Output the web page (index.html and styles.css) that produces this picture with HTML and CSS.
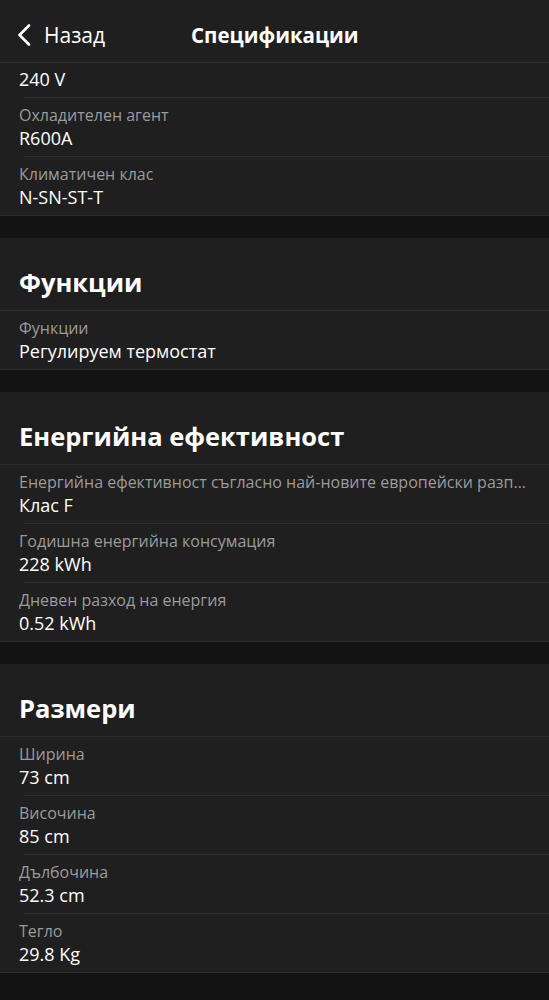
FILE: index.html
```html
<!DOCTYPE html>
<html lang="bg">
<head>
  <meta charset="UTF-8">
  <meta name="viewport" content="width=device-width, initial-scale=1.0">
  <title>Спецификации</title>
  <link rel="stylesheet" href="styles.css">
</head>
<body>

<header class="topbar">
  <a class="back" href="#">
    <svg width="14" height="22" viewBox="0 0 14 22" aria-hidden="true">
      <path d="M12 1.5 L2.5 11 L12 20.5" fill="none" stroke="#fff" stroke-width="2.6" stroke-linecap="round" stroke-linejoin="round"/>
    </svg>
    <span>Назад</span>
  </a>
  <h1 class="topbar-title">Спецификации</h1>
</header>

<main class="specs">
  <section class="group">
    <div class="row row-cut">
      <div class="value">240 V</div>
    </div>
    <div class="row">
      <div class="label">Охладителен агент</div>
      <div class="value">R600A</div>
    </div>
    <div class="row">
      <div class="label">Климатичен клас</div>
      <div class="value">N-SN-ST-T</div>
    </div>
  </section>

  <section class="group">
    <h2 class="group-title">Функции</h2>
    <div class="row">
      <div class="label">Функции</div>
      <div class="value">Регулируем термостат</div>
    </div>
  </section>

  <section class="group">
    <h2 class="group-title">Енергийна ефективност</h2>
    <div class="row">
      <div class="label">Енергийна ефективност съгласно най-новите европейски разпоредби</div>
      <div class="value">Клас F</div>
    </div>
    <div class="row">
      <div class="label">Годишна енергийна консумация</div>
      <div class="value">228 kWh</div>
    </div>
    <div class="row">
      <div class="label">Дневен разход на енергия</div>
      <div class="value">0.52 kWh</div>
    </div>
  </section>

  <section class="group">
    <h2 class="group-title">Размери</h2>
    <div class="row">
      <div class="label">Ширина</div>
      <div class="value">73 cm</div>
    </div>
    <div class="row">
      <div class="label">Височина</div>
      <div class="value">85 cm</div>
    </div>
    <div class="row">
      <div class="label">Дълбочина</div>
      <div class="value">52.3 cm</div>
    </div>
    <div class="row">
      <div class="label">Тегло</div>
      <div class="value">29.8 Kg</div>
    </div>
  </section>
</main>

</body>
</html>
```

FILE: styles.css
```css
body {
  margin: 0;
  background-color: #131313;
  color: #fff;
  font-family: "Open Sans", "Noto Sans", sans-serif;
}

.topbar {
  display: flex;
  align-items: center;
  box-sizing: border-box;
  height: 63px;
  padding: 7px 0 0 17px;
  background-color: #1f1f1f;
  border-bottom: 1px solid #2c2c2c;
}

.back {
  display: flex;
  align-items: center;
  gap: 13px;
  color: #fff;
  text-decoration: none;
  font-size: 21px;
  line-height: 28px;
}

.topbar-title {
  margin: 0 0 0 86px;
  font-size: 20.5px;
  font-weight: 700;
  line-height: 28px;
}

.group {
  background-color: #1f1f1f;
  border-bottom: 1px solid #2c2c2c;
  margin-bottom: 22px;
}

.group-title {
  margin: 0;
  padding: 28px 19px 12px;
  font-size: 25.5px;
  font-weight: 700;
  line-height: 32px;
  border-bottom: 1px solid #2c2c2c;
}

.row {
  padding: 6px 16px 7px 19px;
  background: linear-gradient(#2c2c2c, #2c2c2c) no-repeat 24px 100% / calc(100% - 24px) 1px;
}

.row:last-child {
  padding-bottom: 6px;
  background: none;
}

.row-cut {
  padding-top: 4px;
}

.label {
  font-size: 16px;
  line-height: 22px;
  color: #9b9b9b;
  white-space: nowrap;
  overflow: hidden;
  text-overflow: ellipsis;
}

.value {
  font-size: 18px;
  line-height: 24px;
}
```
